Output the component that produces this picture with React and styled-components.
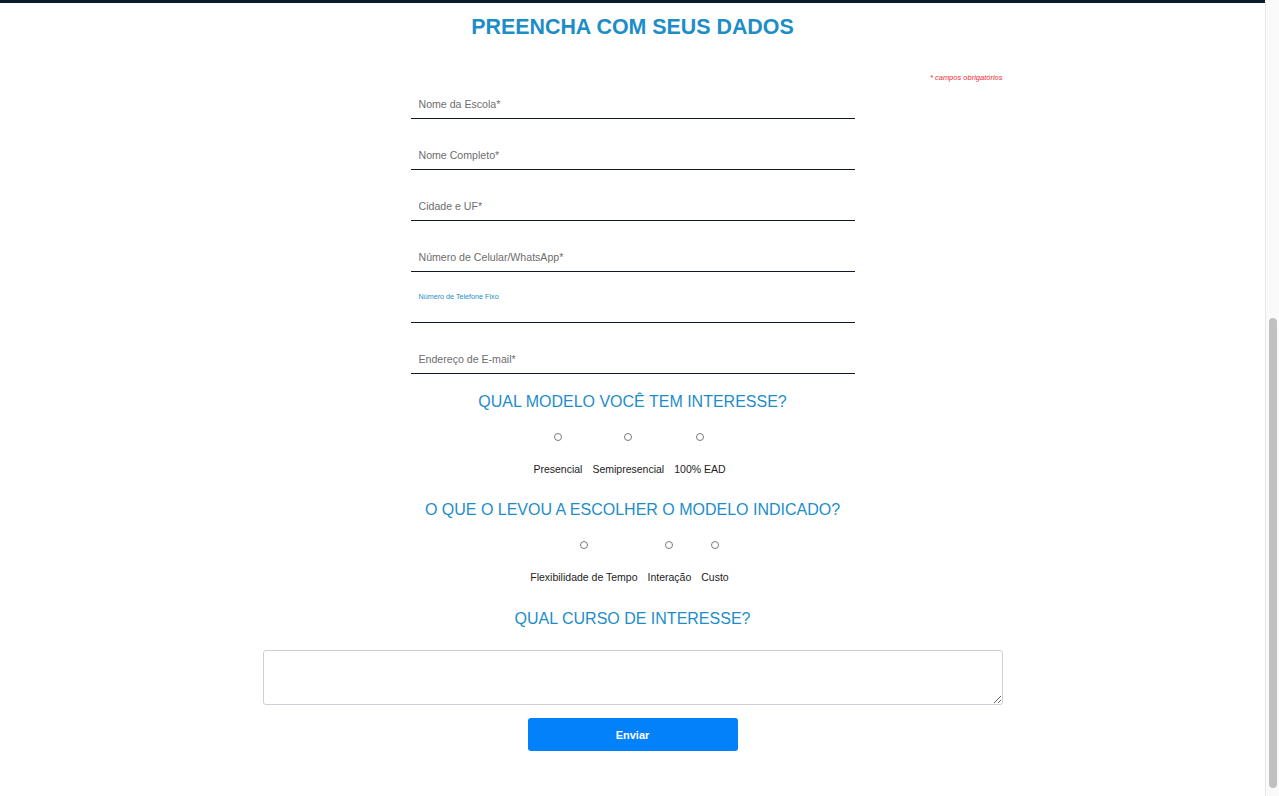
import React from 'react';
import styled, { createGlobalStyle } from 'styled-components';

const GlobalStyle = createGlobalStyle`
    body {
        margin: 0;
        background: #fff;
        font-family: 'Liberation Sans', Arial, sans-serif;
        overflow: hidden;
    }
`;

const Page = styled.div`
    margin-right: 14px;
`;

const TopBar = styled.header`
    height: 3px;
    background: #0b1a2d;
`;

/* fake overlay scrollbar, the page was captured mid-scroll */
const ScrollTrack = styled.div`
    position: fixed;
    top: 0;
    right: 0;
    bottom: 0;
    width: 14px;
    box-sizing: border-box;
    background: #fafafa;
    border-left: 1px solid #e8e8e8;
`;

const ScrollThumb = styled.div`
    position: absolute;
    top: 318px;
    left: 3px;
    width: 8px;
    height: 470px;
    border-radius: 4px;
    background: #c1c1c1;
`;

const Main = styled.main`
    width: 740px;
    margin: 0 auto;
    padding-bottom: 40px;
    display: flex;
    flex-direction: column;
    align-items: center;
`;

const Title = styled.h1`
    margin: 12px 0 0;
    font-size: 21.4px;
    line-height: 25px;
    font-weight: 700;
    color: #1d8dc8;
    text-align: center;
`;

const Note = styled.p`
    align-self: stretch;
    margin: 33px 0 0;
    font-size: 7.5px;
    line-height: 9px;
    font-style: italic;
    color: #ee2b36;
    text-align: right;
`;

const Fields = styled.div`
    width: 444px;
    margin-top: 7px;
    display: flex;
    flex-direction: column;
    gap: 21px;
`;

const Field = styled.div`
    position: relative;
`;

const Input = styled.input`
    display: block;
    width: 100%;
    box-sizing: border-box;
    height: 30px;
    padding: 0 8px;
    border: none;
    border-bottom: 1px solid #0d1b2a;
    outline: none;
    font-family: inherit;
    font-size: 10.6px;
    color: #333;
    background: transparent;
    &::placeholder { color: #6d6d6d; }
`;

const FloatLabel = styled.label`
    position: absolute;
    top: 0;
    left: 8px;
    font-size: 7.2px;
    line-height: 8px;
    color: #1d8dc8;
`;

const Question = styled.h2`
    margin: ${p => p.$top}px 0 0;
    font-size: 16px;
    line-height: 18px;
    font-weight: 400;
    color: #1d8dc8;
    text-align: center;
`;

const Options = styled.div`
    margin-top: 22px;
    padding-right: 6px;
    display: flex;
    justify-content: center;
    gap: 10px;
`;

const Option = styled.label`
    display: flex;
    flex-direction: column;
    align-items: center;
    gap: 22px;
    font-size: 10.5px;
    line-height: 12px;
    color: #222;
`;

const Radio = styled.input`
    appearance: none;
    margin: 0;
    width: 8px;
    height: 8px;
    border: 1px solid #7a7a7a;
    border-radius: 50%;
    box-sizing: border-box;
    background: #fff;
`;

const TextArea = styled.textarea`
    margin-top: 22px;
    width: 740px;
    height: 55px;
    box-sizing: border-box;
    border: 1px solid #cdcfd6;
    border-radius: 3px;
    font-family: inherit;
    outline: none;
`;

const Button = styled.button`
    margin-top: 13px;
    width: 210px;
    height: 33px;
    border: none;
    border-radius: 3px;
    background: #0381fa;
    color: #fff;
    font-family: inherit;
    font-size: 11px;
    font-weight: 700;
`;

const fields = [
    'Nome da Escola*',
    'Nome Completo*',
    'Cidade e UF*',
    'Número de Celular/WhatsApp*',
    null,
    'Endereço de E-mail*',
];

const RadioGroup = ({ name, items }) => (
    <Options>
        {items.map(item => (
            <Option key={item}>
                <Radio type="radio" name={name} />
                {item}
            </Option>
        ))}
    </Options>
);

const App = () => (
    <>
        <GlobalStyle />
        <Page>
            <TopBar />
            <Main>
                <Title>PREENCHA COM SEUS DADOS</Title>
                <Note>* campos obrigatórios</Note>
                <Fields>
                    {fields.map((f, i) => (
                        <Field key={i}>
                            {f ? (
                                <Input placeholder={f} />
                            ) : (
                                <>
                                    <FloatLabel>Número de Telefone Fixo</FloatLabel>
                                    <Input />
                                </>
                            )}
                        </Field>
                    ))}
                </Fields>
                <Question $top={19}>QUAL MODELO VOCÊ TEM INTERESSE?</Question>
                <RadioGroup name="modelo" items={['Presencial', 'Semipresencial', '100% EAD']} />
                <Question $top={26}>O QUE O LEVOU A ESCOLHER O MODELO INDICADO?</Question>
                <RadioGroup name="motivo" items={['Flexibilidade de Tempo', 'Interação', 'Custo']} />
                <Question $top={27}>QUAL CURSO DE INTERESSE?</Question>
                <TextArea />
                <Button>Enviar</Button>
            </Main>
        </Page>
        <ScrollTrack>
            <ScrollThumb />
        </ScrollTrack>
    </>
);

export default App;
